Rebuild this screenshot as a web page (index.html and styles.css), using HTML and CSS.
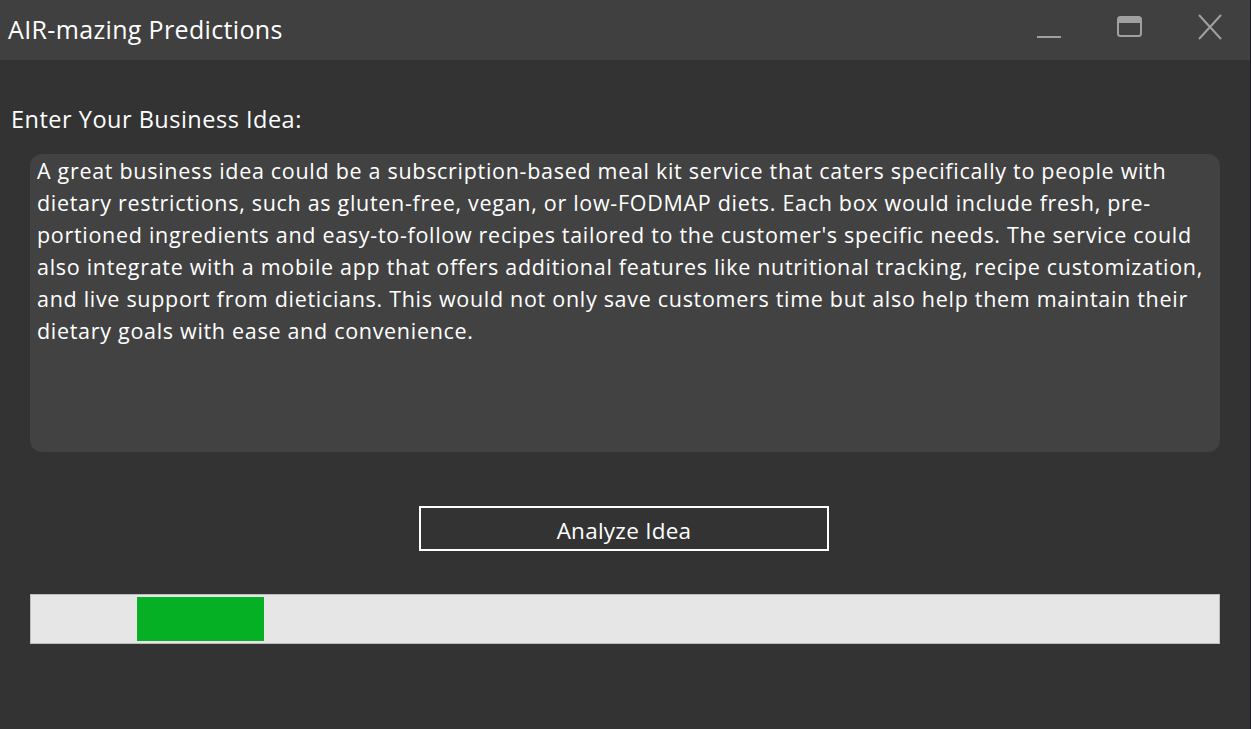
FILE: index.html
```
<!DOCTYPE html>
<html>
<head>
<meta charset="utf-8">
<title>AIR-mazing Predictions</title>
<link rel="stylesheet" href="styles.css">
</head>
<body>
<div class="window">
  <header class="titlebar">
    <div class="title">AIR-mazing Predictions</div>
    <div class="controls">
      <div class="ctl">
        <svg width="26" height="26" viewBox="0 0 26 26"><line x1="0" y1="23" x2="24" y2="23" stroke="#a0a0a0" stroke-width="2"/></svg>
      </div>
      <div class="ctl">
        <svg width="26" height="26" viewBox="0 0 26 26"><rect x="1" y="3" width="23" height="19" rx="2.5" fill="none" stroke="#a0a0a0" stroke-width="2"/><rect x="1" y="3" width="23" height="6" fill="#a0a0a0"/></svg>
      </div>
      <div class="ctl">
        <svg width="26" height="26" viewBox="0 0 26 26"><path d="M2 1 L24 25 M24 1 L2 25" stroke="#a0a0a0" stroke-width="2" fill="none"/></svg>
      </div>
    </div>
  </header>
  <main class="content">
    <div class="label">Enter Your Business Idea:</div>
    <div class="idea">
      <div class="line">A great business idea could be a subscription-based meal kit service that caters specifically to people with</div>
      <div class="line">dietary restrictions, such as gluten-free, vegan, or low-FODMAP diets. Each box would include fresh, pre-</div>
      <div class="line">portioned ingredients and easy-to-follow recipes tailored to the customer's specific needs. The service could</div>
      <div class="line">also integrate with a mobile app that offers additional features like nutritional tracking, recipe customization,</div>
      <div class="line">and live support from dieticians. This would not only save customers time but also help them maintain their</div>
      <div class="line">dietary goals with ease and convenience.</div>
    </div>
    <div class="actions">
      <button class="analyze">Analyze Idea</button>
    </div>
    <div class="progress">
      <div class="progress-fill"></div>
    </div>
  </main>
</div>
</body>
</html>
```
FILE: styles.css
```
html, body {
  margin: 0;
  padding: 0;
  background: #333333;
  height: 100%;
  overflow: hidden;
}
body {
  font-family: "Open Sans", "Noto Sans", sans-serif;
  color: #ffffff;
}
.window {
  width: 1250px;
  height: 729px;
  border-right: 1px solid #1c1c22;
  background: #333333;
}
.titlebar {
  height: 60px;
  background: #404040;
  display: flex;
  align-items: center;
}
.title {
  padding-left: 8px;
  font-size: 25px;
  letter-spacing: 0.35px;
  padding-bottom: 3px;
  color: #ffffff;
}
.controls {
  margin-left: auto;
  display: flex;
  height: 60px;
}
.ctl {
  width: 80px;
  height: 60px;
  display: flex;
  align-items: center;
  justify-content: center;
  padding-bottom: 6px;
  box-sizing: border-box;
}
.content {
  padding-top: 43px;
}
.label {
  padding-left: 11px;
  font-size: 23.5px;
  letter-spacing: 0.5px;
  line-height: 32px;
}
.idea {
  margin: 19px 30px 0 30px;
  height: 298px;
  box-sizing: border-box;
  background: #424242;
  border-radius: 12px;
  padding: 1px 7px;
  font-size: 21.5px;
  letter-spacing: 0.7px;
  line-height: 32px;
}
.line {
  white-space: nowrap;
}
.actions {
  display: flex;
  justify-content: center;
  margin-top: 54px;
  padding-right: 2px;
}
.analyze {
  width: 410px;
  height: 45px;
  background: transparent;
  border: 2px solid #ffffff;
  color: #ffffff;
  font-family: inherit;
  font-size: 22.5px;
  letter-spacing: 0.25px;
  padding: 3px 0 0 0;
}
.progress {
  margin: 43px 30px 0 30px;
  height: 50px;
  box-sizing: border-box;
  border: 1px solid #bcbcbc;
  background: #e6e6e6;
  display: flex;
  padding: 2px 0;
}
.progress-fill {
  margin-left: 106px;
  width: 127px;
  background: #06b025;
}
```
